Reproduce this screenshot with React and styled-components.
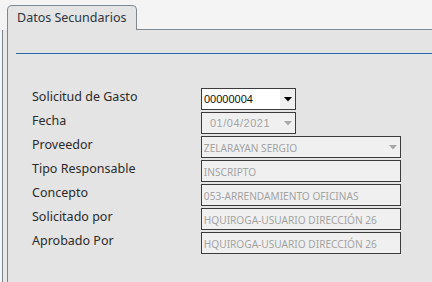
import React from "react";
import styled, { createGlobalStyle } from "styled-components";

const Global = createGlobalStyle`
  html, body { margin: 0; padding: 0; background: #f4f4f4; }
  body { font-family: "Noto Sans", "DejaVu Sans", sans-serif; }
`;

const Page = styled.div`
  width: 432px;
  height: 282px;
  display: flex;
  flex-direction: column;
  overflow: hidden;
  background: #f4f4f4;
`;

const TabBar = styled.div`
  display: flex;
  height: 30px;
  flex: none;
`;

const TabSpacer = styled.div`
  width: 7px;
`;

const Tab = styled.div`
  box-sizing: border-box;
  width: 130px;
  margin-top: 5px;
  height: 25px;
  border: 1px solid #808890;
  border-bottom: none;
  border-radius: 5px 5px 0 0;
  background: #e4e4e4;
  padding-left: 9px;
  font-size: 12.5px;
  line-height: 23px;
  color: #2e3440;
`;

const TabFiller = styled.div`
  flex: 1;
  border-bottom: 1px solid #808890;
`;

const Body = styled.div`
  flex: 1;
  display: flex;
`;

const Gutter = styled.div`
  width: 2px;
  margin-left: 2px;
  border-left: 1px solid #7a8590;
  padding-right: 2px;
  background: #e8e8e8;
`;

const Panel = styled.div`
  flex: 1;
  border-left: 1px solid #7a8590;
  background: #e4e4e4;
  padding-top: 23px;
`;

const Divider = styled.div`
  margin-left: 8px;
  height: 1px;
  background: #2a6fa8;
`;

const Form = styled.div`
  margin-top: 34px;
  padding-left: 24px;
  display: grid;
  grid-template-columns: 169px auto;
  grid-auto-rows: 22px;
  row-gap: 2px;
  align-items: start;
`;

const Label = styled.div`
  font-size: 12.5px;
  line-height: 18px;
  color: #2b2b2b;
  white-space: nowrap;
`;

const Field = styled.div`
  box-sizing: border-box;
  width: ${(p) => p.$w}px;
  height: 22px;
  border: 1px solid #3c3c3c;
  background: ${(p) => (p.$enabled ? "#ffffff" : "#f0f0f0")};
  display: flex;
  align-items: center;
  font-size: 11px;
  color: ${(p) => (p.$enabled ? "#111" : "#a3a3a3")};
  white-space: nowrap;
  overflow: hidden;
`;

const FieldText = styled.span`
  flex: 1;
  padding-left: ${(p) => p.$pad ?? 2}px;
  font-family: ${(p) => (p.$mono ? '"Liberation Sans", Arial, sans-serif' : '"Noto Sans", sans-serif')};
  letter-spacing: ${(p) => p.$ls ?? 0}px;
  ${(p) => (p.$cond ? "transform: scaleX(0.92); transform-origin: left center;" : "")}
`;

const ArrowBox = styled.div`
  width: 15px;
  align-self: stretch;
  display: flex;
  align-items: center;
  justify-content: center;
  background: ${(p) => (p.$enabled ? "#f0f0f0" : "transparent")};
`;

const Arrow = ({ color }) => (
  <svg width="8" height="5" viewBox="0 0 8 5">
    <polygon points="0,0 8,0 4,4.5" fill={color} />
  </svg>
);

export default function App() {
  return (
    <Page>
      <Global />
      <TabBar>
        <TabSpacer />
        <Tab>Datos Secundarios</Tab>
        <TabFiller />
      </TabBar>
      <Body>
        <Gutter />
        <Panel>
          <Divider />
          <Form>
            <Label>Solicitud de Gasto</Label>
            <Field $w={95} $enabled>
              <FieldText $mono>00000004</FieldText>
              <ArrowBox $enabled>
                <Arrow color="#000" />
              </ArrowBox>
            </Field>

            <Label>Fecha</Label>
            <Field $w={95}>
              <FieldText $mono $pad={8} $ls={0.5}>01/04/2021</FieldText>
              <ArrowBox>
                <Arrow color="#a8a8a8" />
              </ArrowBox>
            </Field>

            <Label>Proveedor</Label>
            <Field $w={200}>
              <FieldText $cond>ZELARAYAN SERGIO</FieldText>
              <ArrowBox>
                <Arrow color="#a8a8a8" />
              </ArrowBox>
            </Field>

            <Label>Tipo Responsable</Label>
            <Field $w={200}>
              <FieldText $cond>INSCRIPTO</FieldText>
            </Field>

            <Label>Concepto</Label>
            <Field $w={200}>
              <FieldText $cond>053-ARRENDAMIENTO OFICINAS</FieldText>
            </Field>

            <Label>Solicitado por</Label>
            <Field $w={200}>
              <FieldText $cond>HQUIROGA-USUARIO DIRECCIÓN 26</FieldText>
            </Field>

            <Label>Aprobado Por</Label>
            <Field $w={200}>
              <FieldText $cond>HQUIROGA-USUARIO DIRECCIÓN 26</FieldText>
            </Field>
          </Form>
        </Panel>
      </Body>
    </Page>
  );
}
